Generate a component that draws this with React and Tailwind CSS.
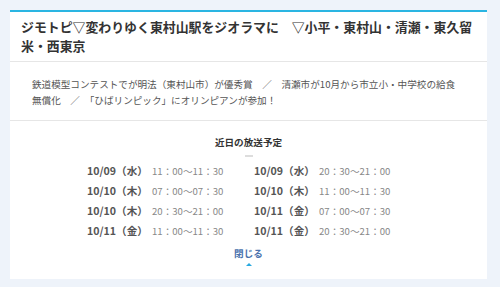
import React from "react";

const schedule = [
  ["10/09（水）", "11：00～11：30"],
  ["10/09（水）", "20：30～21：00"],
  ["10/10（木）", "07：00～07：30"],
  ["10/10（木）", "11：00～11：30"],
  ["10/10（木）", "20：30～21：00"],
  ["10/11（金）", "07：00～07：30"],
  ["10/11（金）", "11：00～11：30"],
  ["10/11（金）", "20：30～21：00"],
];

export default function App() {
  return (
    <div className="w-[500px] h-[287px] bg-[#eef3fa] pt-[10px] font-['Noto_Sans_CJK_JP',sans-serif]">
      <div className="ml-[10px] w-[477px] bg-white border-t-2 border-[#2ab5e2]">
        <div className="px-[11px] pt-[5px] pb-[6px] border-b border-[#e6e6e6]">
          <h1 className="w-[452px] text-[12.9px] leading-[19px] font-bold text-[#333]">
            ジモトピ▽変わりゆく東村山駅をジオラマに　▽小平・東村山・清瀬・東久留米・西東京
          </h1>
        </div>

        <div className="px-[22px] pt-[14px] pb-[12px] border-b border-[#e6e6e6]">
          <p className="w-[430px] text-[9.6px] leading-[16px] text-[#555]">
            鉄道模型コンテストでが明法（東村山市）が優秀賞　／　清瀬市が10月から市立小・中学校の給食無償化　／　「ひばリンピック」にオリンピアンが参加！
          </p>
        </div>

        <div className="pt-[14px] pb-[13px] flex flex-col items-center">
          <h2 className="text-[9.6px] leading-[14px] font-bold text-[#333]">近日の放送予定</h2>
          <div className="mt-[6px] w-[8px] h-[2px] bg-[#dddddd]" />
          <div className="mt-[4px] self-start ml-[77px] grid grid-cols-[167px_167px]">
            {schedule.map(([d, t], i) => (
              <div key={i} className="flex items-center h-[20px]">
                <span className="w-[65px] text-[10.6px] font-bold text-[#555]">{d}</span>
                <span className="text-[9.6px] text-[#888]">{t}</span>
              </div>
            ))}
          </div>
          <button className="mt-[5px] text-[9.6px] leading-[14px] font-bold text-[#4a72ad]">閉じる</button>
          <div className="mt-[3px] w-0 h-0 border-l-[3px] border-r-[3px] border-b-[3px] border-l-transparent border-r-transparent border-b-[#29a9e0]" />
        </div>
      </div>
    </div>
  );
}
